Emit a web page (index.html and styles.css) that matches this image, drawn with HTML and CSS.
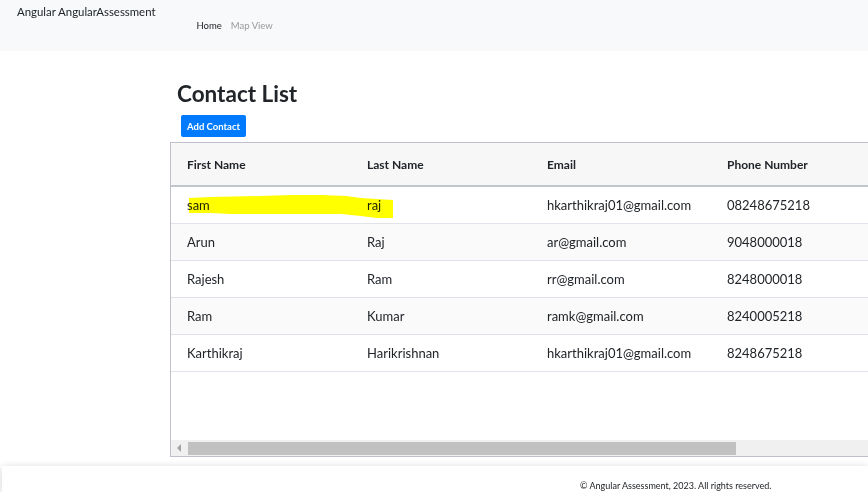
FILE: index.html
```html
<!DOCTYPE html>
<html lang="en">
<head>
<meta charset="utf-8">
<title>AngularAssessment</title>
<link rel="stylesheet" href="styles.css">
</head>
<body>
<header class="navbar">
  <a class="brand" href="#">Angular AngularAssessment</a>
  <ul class="nav">
    <li><a class="nav-link active" href="#">Home</a></li>
    <li><a class="nav-link" href="#">Map View</a></li>
  </ul>
</header>

<main class="container">
  <h2 class="title">Contact List</h2>
  <button class="btn-add" type="button">Add Contact</button>

  <div class="table-wrap">
    <div class="table-area">
      <table class="contacts">
        <thead>
          <tr><th>First Name</th><th>Last Name</th><th>Email</th><th>Phone Number</th><th></th></tr>
        </thead>
        <tbody>
          <tr><td>sam</td><td>raj</td><td>hkarthikraj01@gmail.com</td><td>08248675218</td><td></td></tr>
          <tr><td>Arun</td><td>Raj</td><td>ar@gmail.com</td><td>9048000018</td><td></td></tr>
          <tr><td>Rajesh</td><td>Ram</td><td>rr@gmail.com</td><td>8248000018</td><td></td></tr>
          <tr><td>Ram</td><td>Kumar</td><td>ramk@gmail.com</td><td>8240005218</td><td></td></tr>
          <tr><td>Karthikraj</td><td>Harikrishnan</td><td>hkarthikraj01@gmail.com</td><td>8248675218</td><td></td></tr>
        </tbody>
      </table>
    </div>
    <div class="hscroll">
      <span class="arrow"></span>
      <span class="thumb"></span>
    </div>
    <svg class="marker" width="240" height="90" viewBox="0 0 240 90" aria-hidden="true">
      <path d="M18 55 L40 54 L90 53 L120 52 L150 52 L175 53 L190 55 L205 56 L222 57 L222 75 L205 75 L190 73 L170 71 L150 71 L120 71 L90 71 L60 71 L40 70 L18 70 Z" fill="#ffff00"/>
    </svg>
  </div>
</main>

<footer class="footer">
  <p>&copy; Angular Assessment, 2023. All rights reserved.</p>
</footer>
</body>
</html>
```

FILE: styles.css
```css
* { box-sizing: border-box; }

html, body {
  margin: 0;
  padding: 0;
  overflow: hidden;
  background: #ffffff;
  font-family: Lato, "Noto Sans", sans-serif;
  color: #212529;
}

.navbar {
  height: 51px;
  background: #f8f9fa;
  display: flex;
  align-items: flex-start;
  padding: 3px 0 0 17px;
}

.brand {
  font-size: 11.4px;
  color: #212529;
  text-decoration: none;
  line-height: 18px;
}

.nav {
  list-style: none;
  margin: 10px 0 0 41px;
  padding: 0;
  display: flex;
  gap: 9px;
}

.nav-link {
  font-size: 9.5px;
  line-height: 14px;
  color: #9a9a9a;
  text-decoration: none;
}

.nav-link.active { color: #212529; }

.container {
  padding-left: 170px;
}

.title {
  margin: 27px 0 0 7px;
  font-size: 22.5px;
  font-weight: 700;
  line-height: 32px;
  color: #212529;
}

.btn-add {
  display: block;
  margin: 5px 0 0 11px;
  height: 22px;
  width: 65px;
  padding: 0;
  border: none;
  border-radius: 2px;
  background: #007bff;
  color: #ffffff;
  font-family: inherit;
  font-size: 9.5px;
  font-weight: 700;
}

.table-wrap {
  position: relative;
  margin-top: 5px;
  width: 720px;
  height: 315px;
  border: 1px solid #bfc0cc;
  border-right: none;
  display: flex;
  flex-direction: column;
}

.table-area {
  flex: 1;
  overflow: hidden;
}

.contacts {
  border-collapse: collapse;
  width: 900px;
  table-layout: fixed;
}

.contacts th,
.contacts td {
  width: 180px;
  text-align: left;
  padding: 0 0 0 16px;
  white-space: nowrap;
}

.contacts th {
  height: 43px;
  background: #f7f7f7;
  font-size: 12px;
  font-weight: 700;
  color: #212529;
  border-bottom: 2px solid #c3c5cc;
}

.contacts td {
  height: 37px;
  font-size: 13px;
  color: #212529;
  border-bottom: 1px solid #e1e3ea;
}

.contacts tbody tr:nth-child(even) td { background: #fafafa; }

.hscroll {
  height: 16px;
  background: #f0f0f0;
  display: flex;
  align-items: center;
  padding-left: 6px;
}

.arrow {
  width: 0;
  height: 0;
  border-top: 4px solid transparent;
  border-bottom: 4px solid transparent;
  border-right: 4px solid #a3a3a3;
}

.thumb {
  margin-left: 7px;
  width: 548px;
  height: 13px;
  background: #c1c1c1;
}

.marker {
  position: absolute;
  left: 0;
  top: 0;
  mix-blend-mode: multiply;
  pointer-events: none;
}

.footer {
  margin: 9px 0 0 2px;
  height: 26px;
  background: #ffffff;
  box-shadow: 0 3px 8px rgba(0, 0, 0, 0.16), 0 -2px 6px rgba(0, 0, 0, 0.04);
  padding-left: 578px;
}

.footer p {
  margin: 0;
  padding-top: 14px;
  font-size: 9px;
  line-height: 12px;
  color: #212529;
}
```
